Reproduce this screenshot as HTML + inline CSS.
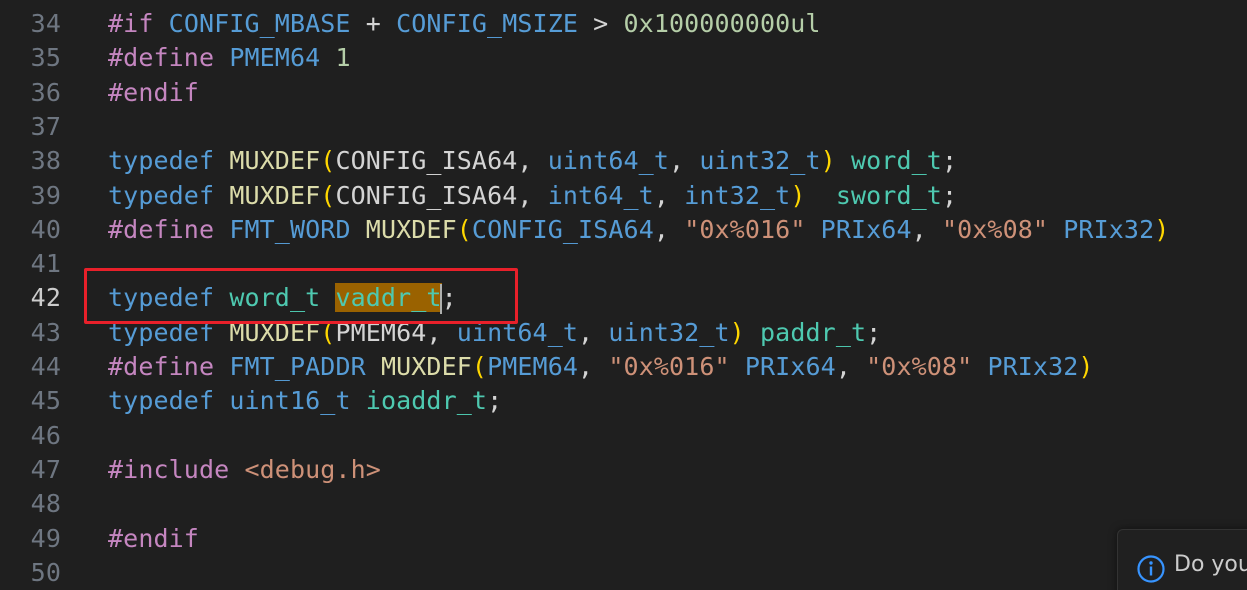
<!DOCTYPE html>
<html><head><meta charset="utf-8"><style>
html,body{margin:0;padding:0;background:#1f1f1f;width:1247px;height:590px;overflow:hidden;position:relative}
.l{position:absolute;left:0;height:34px;line-height:34px;font-family:"DejaVu Sans Mono","Liberation Mono",monospace;font-size:25px;letter-spacing:0.11px;white-space:pre;color:#d4d4d4}
.n{position:absolute;left:0;width:61px;text-align:right;color:#6e7681}
.c{position:absolute;left:108px}
.k{color:#569cd6}.p{color:#c586c0}.m{color:#dcdcaa}.t{color:#4ec9b0}.s{color:#ce9178}.g{color:#b5cea8}.y{color:#ffd700}.v{color:#d4d4d4}
.hl{background:#9a6200}
</style></head><body>
<div class="l" style="top:-27px"><span class="n">33</span></div>
<div class="l" style="top:7px"><span class="n">34</span><span class="c"><span class="p">#if</span> <span class="k">CONFIG_MBASE</span> + <span class="k">CONFIG_MSIZE</span> &gt; <span class="g">0x100000000ul</span></span></div>
<div class="l" style="top:41px"><span class="n">35</span><span class="c"><span class="p">#define</span> <span class="k">PMEM64</span> <span class="g">1</span></span></div>
<div class="l" style="top:76px"><span class="n">36</span><span class="c"><span class="p">#endif</span></span></div>
<div class="l" style="top:110px"><span class="n">37</span></div>
<div class="l" style="top:144px"><span class="n">38</span><span class="c"><span class="k">typedef</span> <span class="m">MUXDEF</span><span class="y">(</span>CONFIG_ISA64, <span class="k">uint64_t</span>, <span class="k">uint32_t</span><span class="y">)</span> <span class="t">word_t</span>;</span></div>
<div class="l" style="top:179px"><span class="n">39</span><span class="c"><span class="k">typedef</span> <span class="m">MUXDEF</span><span class="y">(</span>CONFIG_ISA64, <span class="k">int64_t</span>, <span class="k">int32_t</span><span class="y">)</span>  <span class="t">sword_t</span>;</span></div>
<div class="l" style="top:213px"><span class="n">40</span><span class="c"><span class="p">#define</span> <span class="k">FMT_WORD</span> <span class="m">MUXDEF</span><span class="y">(</span><span class="k">CONFIG_ISA64</span>, <span class="s">"0x%016"</span> <span class="k">PRIx64</span>, <span class="s">"0x%08"</span> <span class="k">PRIx32</span><span class="y">)</span></span></div>
<div class="l" style="top:247px"><span class="n">41</span></div>
<div class="l" style="top:281px"><span class="n" style="color:#cccccc">42</span><span class="c"><span class="k">typedef</span> <span class="t">word_t</span> <span class="t hl">vaddr_t</span><span style="display:inline-block;width:2px;height:30px;background:#aeafad;vertical-align:middle;margin-left:-2px"></span>;</span></div>
<div class="l" style="top:316px"><span class="n">43</span><span class="c"><span class="k">typedef</span> <span class="m">MUXDEF</span><span class="y">(</span>PMEM64, <span class="k">uint64_t</span>, <span class="k">uint32_t</span><span class="y">)</span> <span class="t">paddr_t</span>;</span></div>
<div class="l" style="top:350px"><span class="n">44</span><span class="c"><span class="p">#define</span> <span class="k">FMT_PADDR</span> <span class="m">MUXDEF</span><span class="y">(</span><span class="k">PMEM64</span>, <span class="s">"0x%016"</span> <span class="k">PRIx64</span>, <span class="s">"0x%08"</span> <span class="k">PRIx32</span><span class="y">)</span></span></div>
<div class="l" style="top:384px"><span class="n">45</span><span class="c"><span class="k">typedef</span> <span class="k">uint16_t</span> <span class="t">ioaddr_t</span>;</span></div>
<div class="l" style="top:419px"><span class="n">46</span></div>
<div class="l" style="top:453px"><span class="n">47</span><span class="c"><span class="p">#include</span> <span class="s">&lt;debug.h&gt;</span></span></div>
<div class="l" style="top:487px"><span class="n">48</span></div>
<div class="l" style="top:522px"><span class="n">49</span><span class="c"><span class="p">#endif</span></span></div>
<div class="l" style="top:556px"><span class="n">50</span></div>
<div style="position:absolute;left:84px;top:268px;width:428px;height:50px;border:3px solid #e8202a;border-radius:2px"></div>
<div style="position:absolute;left:1117px;top:529px;width:140px;height:80px;background:#202020;border:1px solid #333;border-radius:6px;box-shadow:0 0 8px rgba(0,0,0,.5)">
<svg style="position:absolute;left:18px;top:24px" width="30" height="30" viewBox="0 0 30 30"><circle cx="15" cy="15" r="12.5" fill="none" stroke="#3794ff" stroke-width="2.2"/><circle cx="15" cy="9" r="1.7" fill="#3794ff"/><rect x="13.8" y="12.5" width="2.4" height="9" fill="#3794ff"/></svg>
<div style="position:absolute;left:56px;top:22px;font-family:'DejaVu Sans','Liberation Sans',sans-serif;font-size:22px;color:#cccccc;white-space:nowrap">Do you</div>
</div>
</body></html>
